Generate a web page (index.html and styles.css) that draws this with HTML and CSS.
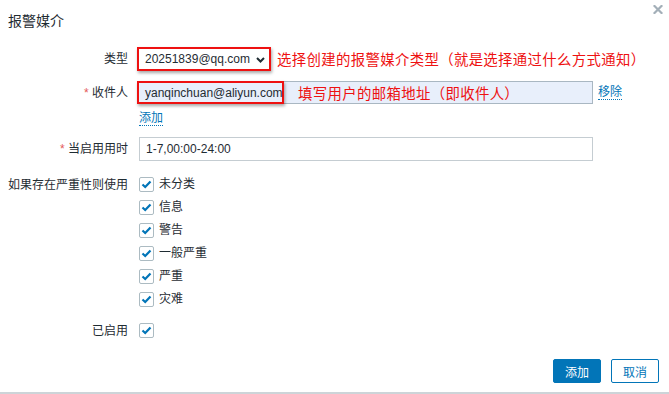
FILE: index.html
```html
<!DOCTYPE html>
<html lang="zh">
<head>
<meta charset="utf-8">
<link rel="stylesheet" href="styles.css">
</head>
<body>
<div class="dialog">
  <div class="header">
    <h4 class="title">报警媒介</h4>
    <button class="close" aria-label="关闭">
      <svg width="10" height="9" viewBox="0 0 10 9"><path d="M1.5 1 L8.5 8 M8.5 1 L1.5 8" stroke="#a3afb8" stroke-width="2.2" stroke-linecap="square"/></svg>
    </button>
  </div>
  <div class="form">
    <div class="row row-type">
      <label class="lbl">类型</label>
      <div class="field">
        <div class="redbox select">
          <span>20251839@qq.com</span>
          <svg class="chev" width="9" height="6" viewBox="0 0 9 6"><path d="M1 1 L4.5 4.5 L8 1" stroke="#1f2c33" stroke-width="2" fill="none"/></svg>
        </div>
        <span class="note">选择创建的报警媒介类型（就是选择通过什么方式通知）</span>
      </div>
    </div>
    <div class="row row-to">
      <label class="lbl"><span class="req">*</span> 收件人</label>
      <div class="field">
        <div class="input filled">
          <div class="redbox mail">yanqinchuan@aliyun.com</div>
          <span class="note note2">填写用户的邮箱地址（即收件人）</span>
        </div>
        <a class="link remove">移除</a>
      </div>
    </div>
    <div class="row row-add">
      <span class="lbl"></span>
      <div class="field"><a class="link">添加</a></div>
    </div>
    <div class="row row-period">
      <label class="lbl"><span class="req">*</span> 当启用用时</label>
      <div class="field"><div class="input plain">1-7,00:00-24:00</div></div>
    </div>
    <div class="row row-sev">
      <label class="lbl">如果存在严重性则使用</label>
      <ul class="checks">
        <li><span class="cb"><svg width="11" height="9" viewBox="0 0 11 9"><path d="M1.5 4.5 L4.2 7 L9.5 1.5" stroke="#0275b8" stroke-width="2.2" fill="none"/></svg></span>未分类</li>
        <li><span class="cb"><svg width="11" height="9" viewBox="0 0 11 9"><path d="M1.5 4.5 L4.2 7 L9.5 1.5" stroke="#0275b8" stroke-width="2.2" fill="none"/></svg></span>信息</li>
        <li><span class="cb"><svg width="11" height="9" viewBox="0 0 11 9"><path d="M1.5 4.5 L4.2 7 L9.5 1.5" stroke="#0275b8" stroke-width="2.2" fill="none"/></svg></span>警告</li>
        <li><span class="cb"><svg width="11" height="9" viewBox="0 0 11 9"><path d="M1.5 4.5 L4.2 7 L9.5 1.5" stroke="#0275b8" stroke-width="2.2" fill="none"/></svg></span>一般严重</li>
        <li><span class="cb"><svg width="11" height="9" viewBox="0 0 11 9"><path d="M1.5 4.5 L4.2 7 L9.5 1.5" stroke="#0275b8" stroke-width="2.2" fill="none"/></svg></span>严重</li>
        <li><span class="cb"><svg width="11" height="9" viewBox="0 0 11 9"><path d="M1.5 4.5 L4.2 7 L9.5 1.5" stroke="#0275b8" stroke-width="2.2" fill="none"/></svg></span>灾难</li>
      </ul>
    </div>
    <div class="row row-enabled">
      <label class="lbl">已启用</label>
      <div class="field"><span class="cb"><svg width="11" height="9" viewBox="0 0 11 9"><path d="M1.5 4.5 L4.2 7 L9.5 1.5" stroke="#0275b8" stroke-width="2.2" fill="none"/></svg></span></div>
    </div>
  </div>
  <div class="footer">
    <button class="btn primary">添加</button>
    <button class="btn secondary">取消</button>
  </div>
</div>
</body>
</html>
```

FILE: styles.css
```css
html, body {
  margin: 0;
  padding: 0;
  background: #ffffff;
}
body {
  font-family: "Liberation Sans", Arial, "Noto Sans CJK SC", sans-serif;
  font-size: 12px;
  color: #1f2c33;
}
.dialog {
  width: 669px;
  height: 392px;
  border-bottom: 2px solid #cdd4d8;
  box-sizing: content-box;
  display: flex;
  flex-direction: column;
}
.header {
  height: 47px;
  display: flex;
  justify-content: space-between;
  align-items: flex-start;
}
.title {
  margin: 12px 0 0 8px;
  font-size: 14px;
  font-weight: normal;
  line-height: 18px;
  color: #1f2c33;
}
.close {
  margin: 5px 6px 0 0;
  padding: 0;
  border: 0;
  background: none;
  width: 10px;
  height: 9px;
  display: flex;
}
.form {
  display: flex;
  flex-direction: column;
}
.row {
  display: grid;
  grid-template-columns: 128px 1fr;
  column-gap: 11px;
  align-items: center;
}
.lbl {
  text-align: right;
  line-height: 14px;
  white-space: nowrap;
}
.req {
  color: #e45959;
}
.field {
  display: flex;
  align-items: center;
}
.row-type { height: 24px; }
.row-to { height: 23px; margin-top: 10px; }
.row-add { height: 24px; margin-top: 2px; }
.row-period { height: 24px; margin-top: 7px; }
.row-sev { margin-top: 16px; align-items: start; }
.row-sev .lbl { margin-top: 1px; }
.row-enabled { margin-top: 16px; height: 15px; }

.redbox {
  border: 2px solid #ee1111;
  box-shadow: 1px 2px 3px rgba(0, 0, 0, 0.35);
  box-sizing: border-box;
}
.select {
  margin-left: -2px;
  width: 134px;
  height: 24px;
  display: flex;
  align-items: center;
  justify-content: space-between;
  padding: 0 4px 0 6px;
  background: #ffffff;
}
.chev { margin-top: 1px; }
.note {
  color: #ee1111;
  font-family: "Noto Sans CJK SC", sans-serif;
  font-size: 14.4px;
  letter-spacing: 0.35px;
  line-height: 18px;
  margin-left: 6px;
  white-space: nowrap;
}
.input {
  box-sizing: border-box;
  width: 454px;
  height: 23px;
  display: flex;
  align-items: center;
}
.filled {
  background: #e8effb;
  border: 1px solid #a9b7c2;
}
.mail {
  margin-left: -3px;
  height: 23px;
  width: 147px;
  display: flex;
  align-items: center;
  padding-left: 6px;
  background: #e8effb;
  white-space: nowrap;
  margin-top: 0;
}
.note2 {
  margin-left: 14px;
}
.plain {
  height: 24px;
  border: 1px solid #c5cdd2;
  padding-left: 6px;
  background: #fff;
}
.link {
  color: #0275b8;
  border-bottom: 1px dotted #0275b8;
  line-height: 14px;
  cursor: pointer;
}
.remove {
  margin-left: 5px;
}
.checks {
  list-style: none;
  margin: 0;
  padding: 0;
  display: flex;
  flex-direction: column;
  gap: 8px;
}
.checks li {
  display: flex;
  align-items: center;
  height: 15px;
  line-height: 15px;
}
.cb {
  box-sizing: border-box;
  width: 15px;
  height: 15px;
  border: 1px solid #acbbc2;
  border-radius: 2px;
  display: inline-flex;
  align-items: center;
  justify-content: center;
  margin-right: 5px;
  background: #fff;
}
.footer {
  margin-top: 21px;
  display: flex;
  justify-content: flex-end;
  gap: 10px;
  padding-right: 10px;
}
.btn {
  box-sizing: border-box;
  width: 48px;
  height: 24px;
  border-radius: 2px;
  font-family: "Liberation Sans", Arial, "Noto Sans CJK SC", sans-serif;
  font-size: 12px;
  padding: 0;
  cursor: pointer;
}
.primary {
  background: #0275b8;
  border: 1px solid #0275b8;
  color: #ffffff;
}
.secondary {
  background: #ffffff;
  border: 1px solid #0275b8;
  color: #0275b8;
}
```
